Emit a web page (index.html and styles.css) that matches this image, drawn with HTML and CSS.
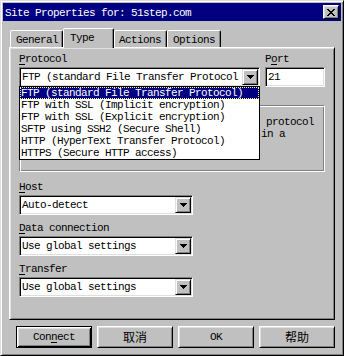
FILE: index.html
```
<!DOCTYPE html>
<html>
<head>
<meta charset="utf-8">
<link rel="stylesheet" href="styles.css">
</head>
<body>
<div class="window">
  <div class="titlebar">
    <span class="title">Site Properties for: 51step.com</span>
    <span class="close"><svg width="8" height="7" viewBox="0 0 8 7" shape-rendering="crispEdges"><path d="M0 0h2v1h-2z M6 0h2v1h-2z M1 1h2v1h-2z M5 1h2v1h-2z M2 2h4v1h-4z M3 3h2v1h-2z M2 4h4v1h-4z M1 5h2v1h-2z M5 5h2v1h-2z M0 6h2v1h-2z M6 6h2v1h-2z" fill="#000"/></svg></span>
  </div>
  <div class="body">
    <div class="tabs">
      <div class="tab w-general">General</div>
      <div class="tab sel w-type">Type</div>
      <div class="tab w-actions">Actions</div>
      <div class="tab w-options">Options</div>
    </div>
    <div class="panel">
      <div class="row-top">
        <div class="field proto">
          <div class="label"><u>P</u>rotocol</div>
          <div class="combo">
            <span class="val">FTP (standard File Transfer Protocol</span>
            <span class="arrow-btn"><svg width="7" height="4" viewBox="0 0 7 4" shape-rendering="crispEdges"><path d="M0 0h7v1h-7z M1 1h5v1h-5z M2 2h3v1h-3z M3 3h1v1h-1z" fill="#000"/></svg></span>
            <div class="list">
              <div class="item hl">FTP (standard File Transfer Protocol)</div>
              <div class="item">FTP with SSL (Implicit encryption)</div>
              <div class="item">FTP with SSL (Explicit encryption)</div>
              <div class="item">SFTP using SSH2 (Secure Shell)</div>
              <div class="item">HTTP (HyperText Transfer Protocol)</div>
              <div class="item">HTTPS (Secure HTTP access)</div>
            </div>
          </div>
        </div>
        <div class="field port">
          <div class="label">P<u>o</u>rt</div>
          <div class="input">21</div>
        </div>
      </div>
      <div class="group">
        <span class="gline g1">protocol</span>
        <span class="gline g2">in a</span>
      </div>
      <div class="field f-host">
        <div class="label"><u>H</u>ost</div>
        <div class="combo short">
          <span class="val">Auto-detect</span>
          <span class="arrow-btn"><svg width="7" height="4" viewBox="0 0 7 4" shape-rendering="crispEdges"><path d="M0 0h7v1h-7z M1 1h5v1h-5z M2 2h3v1h-3z M3 3h1v1h-1z" fill="#000"/></svg></span>
        </div>
      </div>
      <div class="field f-next">
        <div class="label"><u>D</u>ata connection</div>
        <div class="combo short">
          <span class="val">Use global settings</span>
          <span class="arrow-btn"><svg width="7" height="4" viewBox="0 0 7 4" shape-rendering="crispEdges"><path d="M0 0h7v1h-7z M1 1h5v1h-5z M2 2h3v1h-3z M3 3h1v1h-1z" fill="#000"/></svg></span>
        </div>
      </div>
      <div class="field f-next">
        <div class="label"><u>T</u>ransfer</div>
        <div class="combo short">
          <span class="val">Use global settings</span>
          <span class="arrow-btn"><svg width="7" height="4" viewBox="0 0 7 4" shape-rendering="crispEdges"><path d="M0 0h7v1h-7z M1 1h5v1h-5z M2 2h3v1h-3z M3 3h1v1h-1z" fill="#000"/></svg></span>
        </div>
      </div>
    </div>
    <div class="buttons">
      <div class="btn default">Con<u>n</u>ect</div>
      <div class="btn cjk">取消</div>
      <div class="btn">OK</div>
      <div class="btn cjk">帮助</div>
    </div>
  </div>
</div>
</body>
</html>
```
FILE: styles.css
```
* { box-sizing: border-box; }
html, body { margin: 0; padding: 0; }
body {
  width: 344px;
  height: 356px;
  overflow: hidden;
  background: #c0c0c0;
  font-family: "Liberation Mono", "Noto Sans CJK SC", monospace;
  font-size: 11px;
  letter-spacing: -0.6px;
  color: #000;
}
u { text-underline-offset: 2px; }
.window {
  width: 344px;
  height: 356px;
  border: 1px solid;
  border-color: #dfdfdf #000 #000 #dfdfdf;
  box-shadow: inset 1px 1px #fff, inset -1px -1px #808080;
  padding: 2px;
  display: flex;
  flex-direction: column;
  background: #c0c0c0;
}
.titlebar {
  height: 18px;
  flex: none;
  background: #000080;
  color: #fff;
  display: flex;
  align-items: center;
  justify-content: space-between;
  padding: 0 2px;
}
.title { line-height: 12px; padding-top: 1px; white-space: nowrap; }
.close {
  width: 16px;
  height: 14px;
  background: #c0c0c0;
  border: 1px solid;
  border-color: #fff #000 #000 #fff;
  box-shadow: inset 1px 1px #dfdfdf, inset -1px -1px #808080;
  display: flex;
  align-items: center;
  justify-content: center;
}
.body {
  flex: 1;
  padding: 7px 6px 0 6px;
  display: flex;
  flex-direction: column;
}
.tabs {
  display: flex;
  height: 20px;
  margin-bottom: -1px;
  margin-left: 1px;
  position: relative;
  z-index: 2;
  align-items: flex-start;
}
.tab {
  height: 17px;
  margin-top: 2px;
  border: 1px solid;
  border-bottom: none;
  border-color: #fff #000 transparent #fff;
  border-radius: 2px 2px 0 0;
  box-shadow: inset -1px 0 #808080;
  padding: 3px 0 0 5px;
  line-height: 12px;
  background: #c0c0c0;
  white-space: nowrap;
}
.tab.sel { height: 20px; margin-top: 0; padding-left: 6px; }
.w-general { width: 53px; }
.w-type { width: 51px; }
.w-actions { width: 53px; padding-left: 4px; }
.w-options { width: 54px; }
.panel {
  height: 273px;
  flex: none;
  border: 1px solid;
  border-color: #fff #000 #000 #fff;
  box-shadow: inset 1px 1px #dfdfdf, inset -1px -1px #808080;
  padding: 5px 9px 0 9px;
  display: flex;
  flex-direction: column;
  position: relative;
  z-index: 1;
}
.row-top { display: flex; gap: 5px; }
.label { line-height: 12px; height: 12px; margin-bottom: 2px; white-space: nowrap; }
.proto { width: 241px; }
.port { width: 60px; }
.combo {
  height: 20px;
  border: 1px solid;
  border-color: #808080 #fff #fff #808080;
  box-shadow: inset 1px 1px #000, inset -1px -1px #dfdfdf;
  background: #fff;
  display: flex;
  align-items: center;
  padding: 1px;
  position: relative;
}
.combo.short { width: 174px; }
.val {
  flex: 1;
  padding-left: 1px;
  line-height: 16px;
  overflow: hidden;
  white-space: nowrap;
}
.arrow-btn {
  width: 16px;
  height: 16px;
  flex: none;
  background: #c0c0c0;
  border: 1px solid;
  border-color: #dfdfdf #000 #000 #dfdfdf;
  box-shadow: inset 1px 1px #fff, inset -1px -1px #808080;
  display: flex;
  align-items: center;
  justify-content: center;
}
.list {
  position: absolute;
  left: -1px;
  top: 100%;
  width: 241px;
  height: 74px;
  border: 1px solid #000;
  background: #fff;
  z-index: 5;
}
.item {
  height: 12px;
  line-height: 12px;
  padding-left: 1px;
  white-space: nowrap;
  overflow: hidden;
}
.item.hl {
  background: #000080;
  color: #fff;
  outline: 1px dotted #ffff80;
  outline-offset: -1px;
}
.input {
  height: 20px;
  border: 1px solid;
  border-color: #808080 #fff #fff #808080;
  box-shadow: inset 1px 1px #000, inset -1px -1px #dfdfdf;
  background: #fff;
  padding: 1px 1px 1px 2px;
  line-height: 16px;
}
.group {
  height: 67px;
  margin-top: 18px;
  border: 1px solid;
  border-color: #808080 #fff #fff #808080;
  box-shadow: inset 1px 1px #fff, inset -1px -1px #808080;
  padding: 10px 0 0 241px;
  display: flex;
  flex-direction: column;
  align-items: flex-start;
  line-height: 12px;
}
.gline { white-space: nowrap; }
.g1 { margin-left: 5px; }
.f-host { margin-top: 9px; }
.f-next { margin-top: 7px; }
.buttons {
  display: flex;
  gap: 5px;
  justify-content: flex-end;
  margin-top: 6px;
}
.btn {
  width: 76px;
  height: 22px;
  border: 1px solid;
  border-color: #fff #000 #000 #fff;
  box-shadow: inset 1px 1px #dfdfdf, inset -1px -1px #808080;
  display: flex;
  align-items: center;
  justify-content: center;
  line-height: 12px;
}
.btn.default {
  border-color: #000;
  box-shadow: inset 1px 1px #fff, inset -1px -1px #000, inset 2px 2px #dfdfdf, inset -2px -2px #808080;
}
.cjk {
  font-family: "Noto Sans CJK SC", sans-serif;
  font-size: 12px;
  letter-spacing: 0;
}
```
